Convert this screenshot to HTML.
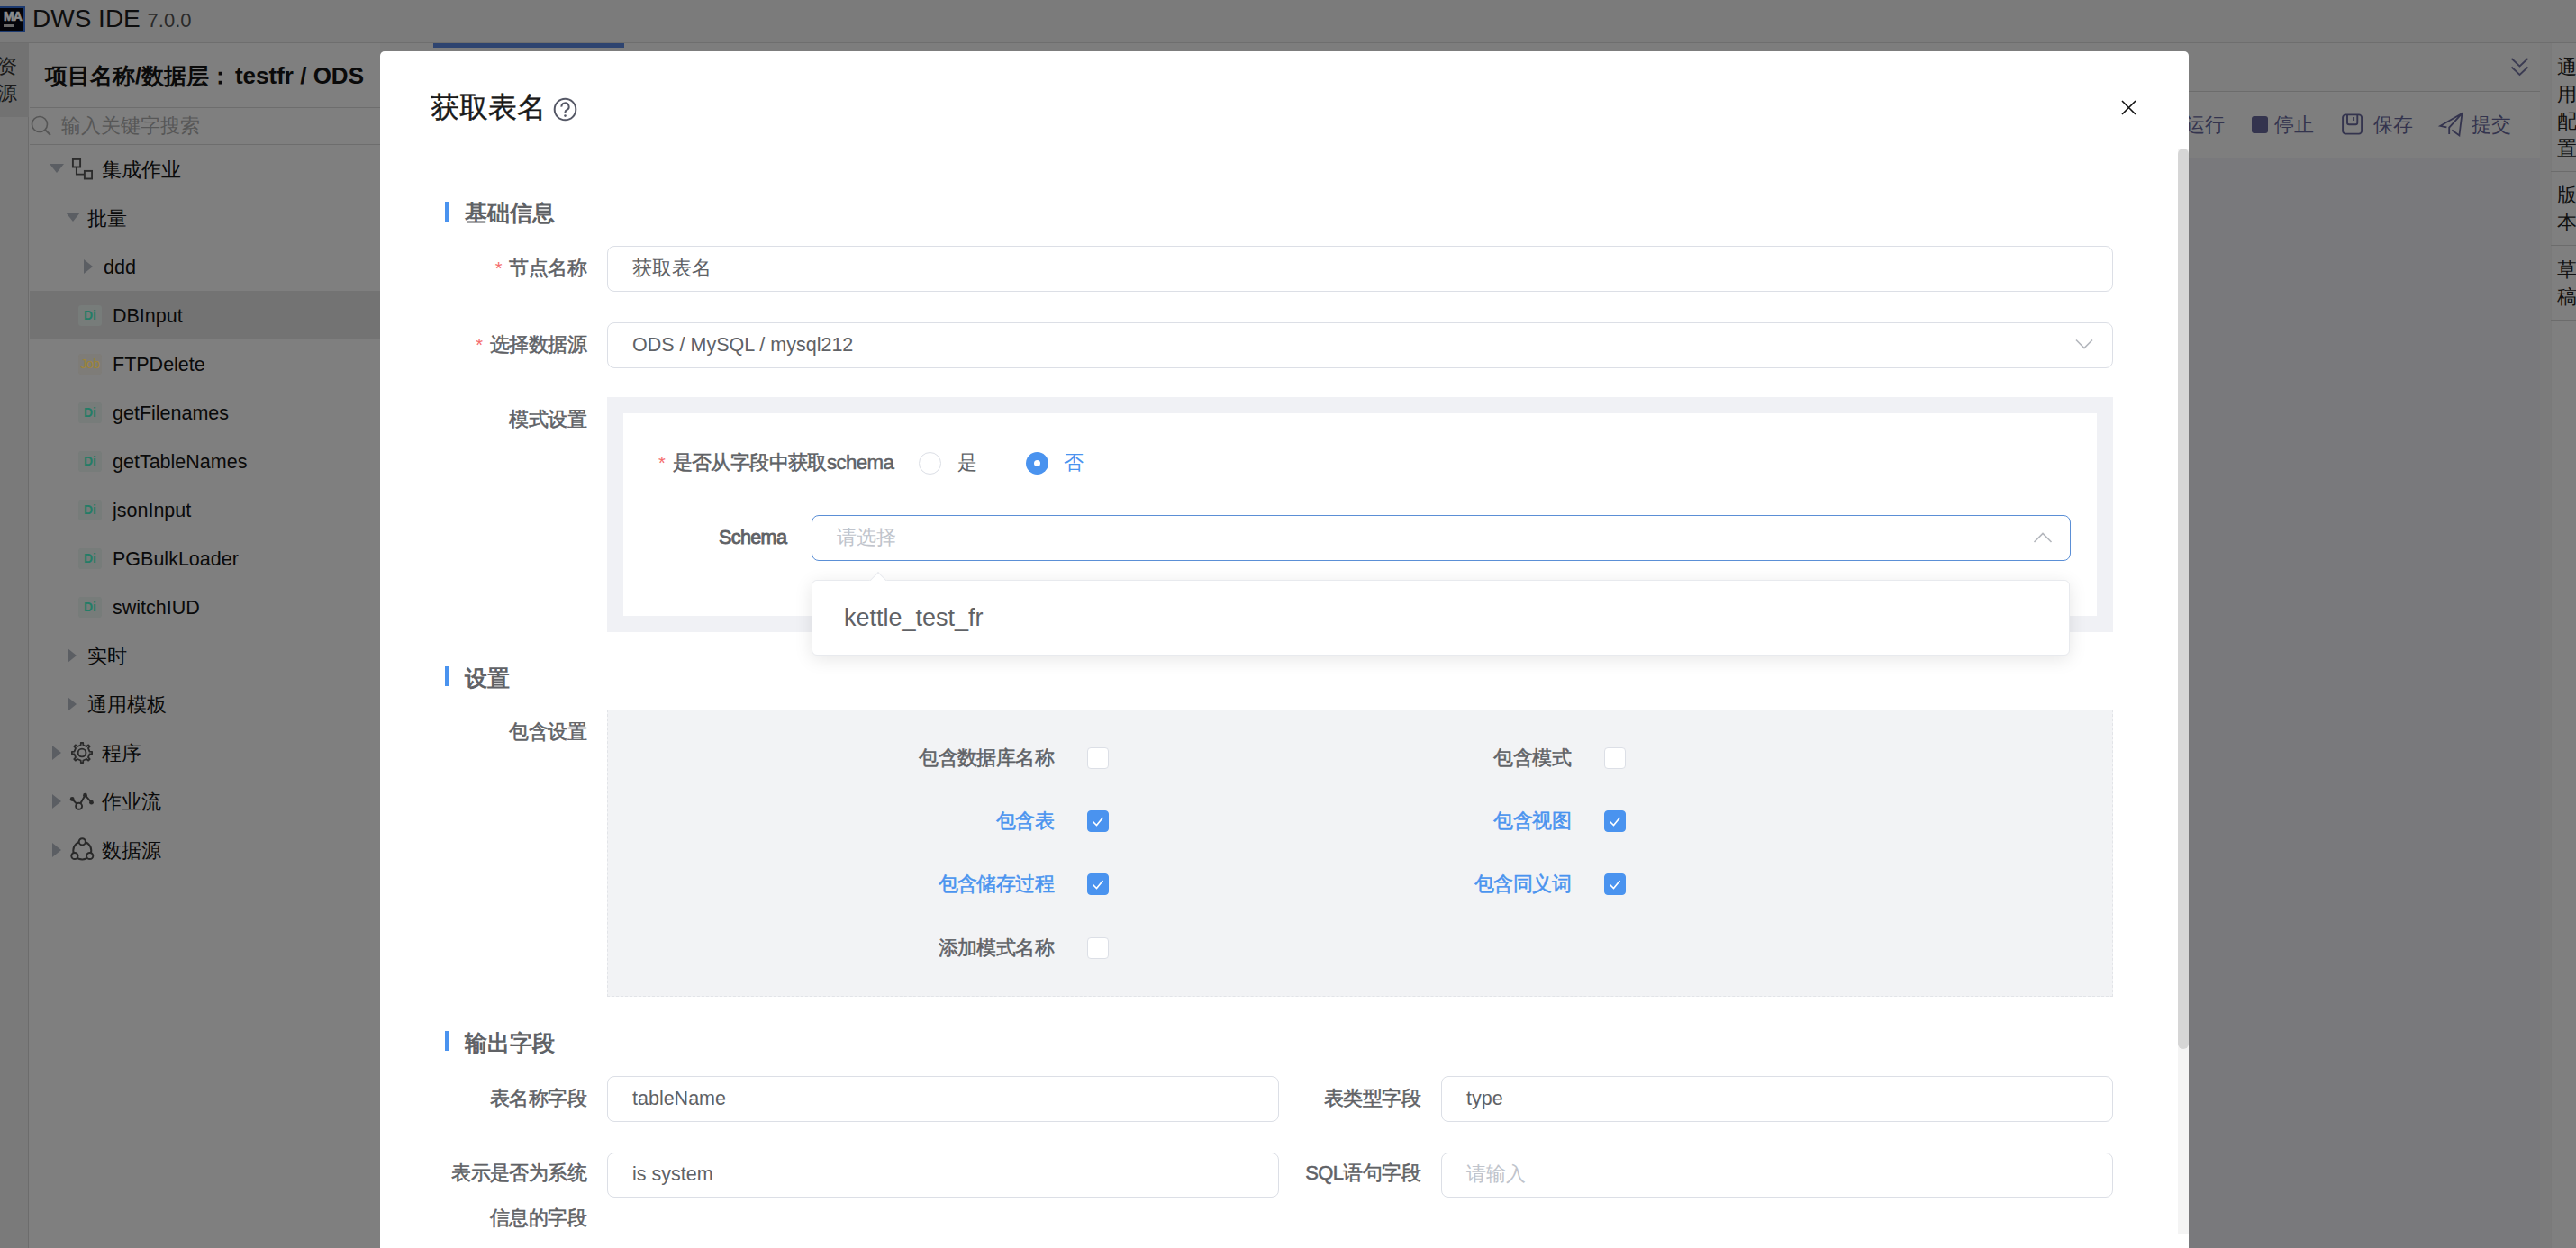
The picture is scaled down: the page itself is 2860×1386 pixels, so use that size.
<!DOCTYPE html>
<html><head><meta charset="utf-8">
<style>
*{box-sizing:border-box}
html,body{margin:0;padding:0}
html{overflow:hidden}
body{width:2860px;height:1386px;overflow:hidden;position:relative;background:#7f7f7f;font-family:"Liberation Sans",sans-serif;color:#111}
.a{position:absolute;white-space:nowrap}
/* header */
#hdr{left:0;top:0;width:2860px;height:48px;background:#7b7b7b;border-bottom:1px solid #6e6e6e}
#tabstrip{left:0;top:48px;width:32px;height:1338px;background:#7a7a7a;border-right:1px solid #6c6c6c}
#tabsel{left:0;top:48px;width:32px;height:82px;background:#727272}
#side{left:33px;top:48px;width:389px;height:1338px;background:#7f7f7f}
.tree{font-size:21.5px;line-height:56px;height:54px;color:#0a0a0a}
.tri{position:absolute;width:0;height:0}
.tri.d{border-left:8px solid transparent;border-right:8px solid transparent;border-top:10px solid #5b5e63}
.tri.r{border-top:8px solid transparent;border-bottom:8px solid transparent;border-left:10px solid #5b5e63}
.badge{position:absolute;width:26px;height:23px;border-radius:3px;font-size:14px;line-height:23px;text-align:center}
.badge.di{background:#777c7a;color:#237d67;font-weight:bold}
.badge.job{background:#7e7c78;color:#a08539;letter-spacing:-0.3px}
/* modal */
#modal{left:422px;top:57px;width:2008px;height:1329px;background:#fff;border-radius:5px 5px 0 0}
.lbl{font-size:22px;letter-spacing:-0.6px;padding-right:1px;color:#606266;text-align:right;-webkit-text-stroke:0.5px #606266}
.req{color:#f56c6c;font-size:20px;margin-right:3px;-webkit-text-stroke:0}
.sec{font-size:25px;color:#606266;font-weight:bold}
.bar{position:absolute;width:4px;height:22px;background:#4a93ef}
.inp{position:absolute;border:1.5px solid #dcdfe6;border-radius:8px;background:#fff;height:50px}
.inp .t{position:absolute;left:27px;top:0;line-height:47px;font-size:21.5px;color:#606266}
.inp .ph{color:#c0c4cc}
.cb{position:absolute;width:24px;height:24px;border:1.5px solid #dcdfe6;border-radius:4px;background:#fff}
.cb.on{background:#4a93ef;border-color:#4a93ef}
.cbl{font-size:22px;letter-spacing:-0.6px;padding-right:1px;color:#606266;text-align:right;-webkit-text-stroke:0.5px #606266}
.cbl.on{color:#4a93ef;-webkit-text-stroke:0.5px #4a93ef}
</style></head>
<body>
<!-- header -->
<div class="a" id="hdr"></div>
<div class="a" style="left:0;top:7px;width:28px;height:29px;background:#03040a;border:2px solid #1c3a70;border-left:none"></div>
<div class="a" style="left:4px;top:11px;font-size:14px;line-height:14px;font-weight:bold;color:#8c8c8c;letter-spacing:-0.8px;-webkit-text-stroke:0.7px #8c8c8c">MA</div>
<div class="a" style="left:4px;top:27px;width:12px;height:3px;background:#6a6a6a"></div>
<div class="a" style="left:36px;top:-1px;font-size:28px;line-height:44px;color:#0e0e0e">DWS IDE <span style="font-size:22px;color:#2a2a2a">7.0.0</span></div>

<div class="a" id="tabstrip"></div>
<div class="a" id="tabsel"></div>
<div class="a" style="left:-3px;top:59px;font-size:22px;line-height:30px;color:#1a1a1a;white-space:normal;width:24px">资源</div>

<!-- sidebar -->
<div class="a" id="side"></div>
<div class="a" style="left:50px;top:66px;font-size:25px;line-height:36px;font-weight:bold;color:#0a0a0a">项目名称/数据层：<span style="font-size:26px;margin-left:4px">testfr / ODS</span></div>
<div class="a" style="left:33px;top:119px;width:389px;height:1px;background:#6d6d6d"></div>
<svg class="a" style="left:34px;top:128px" width="24" height="24" viewBox="0 0 24 24"><circle cx="10" cy="10" r="8.5" fill="none" stroke="#555" stroke-width="1.6"/><line x1="16" y1="16" x2="22" y2="22" stroke="#555" stroke-width="1.8"/></svg>
<div class="a" style="left:68px;top:122px;font-size:22px;line-height:36px;color:#575757">输入关键字搜索</div>
<div class="a" style="left:33px;top:160px;width:389px;height:1px;background:#6d6d6d"></div>

<div class="a" style="left:33px;top:323px;width:389px;height:54px;background:#737373"></div>

<div class="tri d" style="left:55px;top:182px"></div>
<svg class="a" style="left:79px;top:176px" width="24" height="24" viewBox="0 0 24 24"><rect x="1.9" y="0.9" width="8.2" height="8.6" fill="none" stroke="#2c2c2c" stroke-width="1.9"/><path d="M5.9 9.5V17.6H14" fill="none" stroke="#2c2c2c" stroke-width="1.9"/><rect x="14.9" y="13.9" width="8.2" height="8.6" fill="none" stroke="#2c2c2c" stroke-width="1.9"/></svg>
<div class="a tree" style="left:113px;top:161px">集成作业</div>
<div class="tri d" style="left:73px;top:236px"></div>
<div class="a tree" style="left:97px;top:215px">批量</div>
<div class="tri r" style="left:93px;top:288px"></div>
<div class="a tree" style="left:115px;top:269px">ddd</div>
<div class="badge di" style="left:87px;top:339px">Di</div>
<div class="a tree" style="left:125px;top:323px">DBInput</div>
<div class="badge job" style="left:87px;top:393px">Job</div>
<div class="a tree" style="left:125px;top:377px">FTPDelete</div>
<div class="badge di" style="left:87px;top:447px">Di</div>
<div class="a tree" style="left:125px;top:431px">getFilenames</div>
<div class="badge di" style="left:87px;top:501px">Di</div>
<div class="a tree" style="left:125px;top:485px">getTableNames</div>
<div class="badge di" style="left:87px;top:555px">Di</div>
<div class="a tree" style="left:125px;top:539px">jsonInput</div>
<div class="badge di" style="left:87px;top:609px">Di</div>
<div class="a tree" style="left:125px;top:593px">PGBulkLoader</div>
<div class="badge di" style="left:87px;top:663px">Di</div>
<div class="a tree" style="left:125px;top:647px">switchIUD</div>
<div class="tri r" style="left:75px;top:720px"></div>
<div class="a tree" style="left:97px;top:701px">实时</div>
<div class="tri r" style="left:75px;top:774px"></div>
<div class="a tree" style="left:97px;top:755px">通用模板</div>
<div class="tri r" style="left:58px;top:828px"></div>
<svg class="a" style="left:79px;top:824px" width="24" height="24" viewBox="0 0 24 24"><path d="M20.49 10.65 L23.14 10.86 L23.14 13.14 L20.49 13.35 L18.96 17.05 L20.69 19.07 L19.07 20.69 L17.05 18.96 L13.35 20.49 L13.14 23.14 L10.86 23.14 L10.65 20.49 L6.95 18.96 L4.93 20.69 L3.31 19.07 L5.04 17.05 L3.51 13.35 L0.86 13.14 L0.86 10.86 L3.51 10.65 L5.04 6.95 L3.31 4.93 L4.93 3.31 L6.95 5.04 L10.65 3.51 L10.86 0.86 L13.14 0.86 L13.35 3.51 L17.05 5.04 L19.07 3.31 L20.69 4.93 L18.96 6.95Z" fill="none" stroke="#2a2a2a" stroke-width="1.8" stroke-linejoin="round"/><circle cx="12" cy="12" r="4.4" fill="none" stroke="#2a2a2a" stroke-width="1.9"/></svg>
<div class="a tree" style="left:113px;top:809px">程序</div>
<div class="tri r" style="left:58px;top:882px"></div>
<svg class="a" style="left:77px;top:879px" width="28" height="22" viewBox="0 0 28 22"><path d="M3.2 8.5 10.6 16.3 17.5 4.2 24.5 12.2" fill="none" stroke="#2a2a2a" stroke-width="1.9"/><circle cx="3.2" cy="8.5" r="2.4" fill="#2a2a2a"/><circle cx="17.5" cy="4.2" r="2.4" fill="#2a2a2a"/><circle cx="24.5" cy="12.2" r="2.4" fill="#2a2a2a"/><circle cx="10.6" cy="16.3" r="3.5" fill="#7f7f7f" stroke="#2a2a2a" stroke-width="1.9"/></svg>
<div class="a tree" style="left:113px;top:863px">作业流</div>
<div class="tri r" style="left:58px;top:936px"></div>
<svg class="a" style="left:77px;top:929px" width="28" height="28" viewBox="0 0 28 28"><circle cx="14.3" cy="15.5" r="10" fill="none" stroke="#2a2a2a" stroke-width="2"/><circle cx="14.3" cy="5.8" r="3.6" fill="#7f7f7f" stroke="#2a2a2a" stroke-width="2"/><circle cx="5.9" cy="21.5" r="3.6" fill="#7f7f7f" stroke="#2a2a2a" stroke-width="2"/><circle cx="22.7" cy="21.5" r="3.6" fill="#7f7f7f" stroke="#2a2a2a" stroke-width="2"/></svg>
<div class="a tree" style="left:113px;top:917px">数据源</div>

<!-- editor area -->
<div class="a" style="left:422px;top:48px;width:2410px;height:54px;background:#7d7d7d;border-bottom:1px solid #6c6c6c"></div>
<div class="a" style="left:481px;top:48px;width:212px;height:5px;background:#2e4470"></div>
<svg class="a" style="left:2786px;top:63px" width="23" height="23" viewBox="0 0 23 23"><path d="M2.5 2 11.5 10.5 20.5 2M2.5 11.5 11.5 20 20.5 11.5" fill="none" stroke="#3b3b52" stroke-width="1.8"/></svg>
<div class="a" style="left:422px;top:103px;width:2398px;height:73px;background:#7e7e7e"></div>
<div class="a" style="left:422px;top:176px;width:2398px;height:1210px;background:#79797c"></div>
<div class="a" style="left:2426px;top:121px;font-size:22px;line-height:36px;color:#34344e">运行</div>
<div class="a" style="left:2500px;top:129px;width:18px;height:19px;border-radius:3px;background:#34344e"></div>
<div class="a" style="left:2525px;top:121px;font-size:22px;line-height:36px;color:#34344e">停止</div>
<svg class="a" style="left:2598px;top:124px" width="28" height="28" viewBox="0 0 28 28"><rect x="3.1" y="3.4" width="21" height="21.2" rx="3.2" fill="none" stroke="#34344e" stroke-width="1.9"/><path d="M8 3.5V12.3a2 2 0 0 0 2 2H17.3a2 2 0 0 0 2-2V3.5M15.1 6V10" fill="none" stroke="#34344e" stroke-width="1.9"/></svg>
<div class="a" style="left:2635px;top:121px;font-size:22px;line-height:36px;color:#34344e">保存</div>
<svg class="a" style="left:2705px;top:122px" width="32" height="32" viewBox="0 0 32 32"><path d="M11.4 19.4 4.3 17.8 28.5 3.9 25.4 28.4 17.3 22.5M28.5 3.9 14.2 19.7V26.9" fill="none" stroke="#34344e" stroke-width="1.8" stroke-linejoin="miter"/></svg>
<div class="a" style="left:2744px;top:121px;font-size:22px;line-height:36px;color:#34344e">提交</div>

<!-- right panel -->
<div class="a" style="left:2820px;top:48px;width:12px;height:1338px;background:#7b7b7b"></div>
<div class="a" style="left:2832px;top:48px;width:28px;height:1338px;background:#7f7f7f;border-left:1px solid #7a7a7a"></div>

<div class="a" style="left:2832px;top:190px;width:28px;height:1px;background:#6c6c6c"></div>

<div class="a" style="left:2832px;top:272px;width:28px;height:1px;background:#6c6c6c"></div>

<div class="a" style="left:2832px;top:355px;width:28px;height:1px;background:#6c6c6c"></div>
<div class="a" style="left:2832px;top:0;width:28px;height:1386px;overflow:hidden"><div class="a" style="left:7px;top:60px;width:24px;font-size:22px;line-height:30px;color:#111;white-space:normal">通用配置</div><div class="a" style="left:7px;top:202px;width:24px;font-size:22px;line-height:30px;color:#111;white-space:normal">版本</div><div class="a" style="left:7px;top:285px;width:24px;font-size:22px;line-height:30px;color:#111;white-space:normal">草稿</div></div>

<div class="a" id="modal"></div>
<div class="a" style="left:478px;top:99px;font-size:32px;line-height:40px;color:#1a1a1a;-webkit-text-stroke:0.4px #1a1a1a">获取表名</div>
<svg class="a" style="left:614px;top:108px" width="28" height="28" viewBox="0 0 28 28"><circle cx="13.5" cy="13.5" r="11.8" fill="none" stroke="#555866" stroke-width="2"/><path d="M9.4 10.6a4.1 4.1 0 1 1 5.8 3.6c-1 .5-1.7 1.2-1.7 2.3v1.2" fill="none" stroke="#555866" stroke-width="2"/><circle cx="13.5" cy="20.6" r="1.3" fill="#555866"/></svg>
<svg class="a" style="left:2354px;top:110px" width="19" height="19" viewBox="0 0 19 19"><path d="M2 2 17 17M17 2 2 17" stroke="#111" stroke-width="1.6"/></svg>
<div class="a" style="left:2418px;top:165px;width:12px;height:1205px;background:#f4f4f4"></div>
<div class="a" style="left:2418px;top:165px;width:12px;height:1000px;background:#d6d6d6;border-radius:6px"></div>
<div class="bar" style="left:494px;top:224px"></div>
<div class="a sec" style="left:516px;top:218px;line-height:36px">基础信息</div>
<div class="a lbl" style="right:2208px;top:280px;line-height:36px"><span class="req">*</span> 节点名称</div>
<div class="inp" style="left:674px;top:273px;width:1672px;height:51px;"><div class="t" style="line-height:48px">获取表名</div></div>
<div class="a lbl" style="right:2208px;top:365px;line-height:36px"><span class="req">*</span> 选择数据源</div>
<div class="inp" style="left:674px;top:358px;width:1672px;height:51px;"><div class="t" style="line-height:48px">ODS / MySQL / mysql212</div></div>
<svg class="a" style="left:2304px;top:376px" width="20" height="12" viewBox="0 0 20 12"><path d="M1 1.5 10 10.5 19 1.5" fill="none" stroke="#b4b7bd" stroke-width="1.6"/></svg>
<div class="a lbl" style="right:2208px;top:448px;line-height:36px">模式设置</div>
<div class="a" style="left:674px;top:441px;width:1672px;height:261px;background:#f0f1f5"></div>
<div class="a" style="left:692px;top:459px;width:1636px;height:225px;background:#fff"></div>
<div class="a lbl" style="left:731px;top:496px;line-height:36px"><span class="req">*</span> 是否从字段中获取<span style="font-size:22.3px">schema</span></div>
<div class="a" style="left:1020px;top:502px;width:25px;height:25px;border-radius:50%;border:1.5px solid #dcdfe6;background:#fff"></div>
<div class="a" style="left:1063px;top:496px;font-size:22px;line-height:36px;color:#606266;font-weight:500">是</div>
<div class="a" style="left:1139px;top:502px;width:25px;height:25px;border-radius:50%;background:#4a93ef"></div>
<div class="a" style="left:1148px;top:511px;width:7px;height:7px;border-radius:50%;background:#fff"></div>
<div class="a" style="left:1181px;top:496px;font-size:22px;line-height:36px;color:#4a93ef;font-weight:500">否</div>
<div class="a lbl" style="left:798px;top:579px;line-height:36px;font-size:21.5px;-webkit-text-stroke:0.9px #606266">Schema</div>
<div class="inp" style="left:901px;top:572px;width:1398px;height:51px;border-color:#5b8fd6"><div class="t ph" style="line-height:48px">请选择</div></div>
<svg class="a" style="left:2257px;top:590px" width="22" height="14" viewBox="0 0 22 14"><path d="M1.5 12 11 2.5 20.5 12" fill="none" stroke="#b4b7bd" stroke-width="1.6"/></svg>
<div class="a" style="left:901px;top:644px;width:1397px;height:84px;background:#fff;border:1px solid #e8eaee;border-radius:6px;box-shadow:0 4px 20px rgba(0,0,0,0.10)"></div>
<div class="a" style="left:967.5px;top:637.5px;width:14px;height:14px;background:#fff;border-left:1px solid #e8eaee;border-top:1px solid #e8eaee;transform:rotate(45deg)"></div>
<div class="a" style="left:902px;top:645px;width:1395px;height:20px;background:#fff;border-radius:6px 6px 0 0"></div>
<div class="a" style="left:937px;top:666px;font-size:27px;line-height:40px;color:#606266">kettle_test_fr</div>
<div class="bar" style="left:494px;top:740px"></div>
<div class="a sec" style="left:516px;top:735px;line-height:36px">设置</div>
<div class="a lbl" style="right:2208px;top:795px;line-height:36px">包含设置</div>
<div class="a" style="left:674px;top:788px;width:1672px;height:319px;background:#f2f3f5;border:1px dashed #e2e4e8"></div>
<div class="a cbl" style="right:1689px;top:824px;line-height:36px">包含数据库名称</div>
<div class="cb" style="left:1207px;top:830px"></div>
<div class="a cbl" style="right:1115px;top:824px;line-height:36px">包含模式</div>
<div class="cb" style="left:1781px;top:830px"></div>
<div class="a cbl on" style="right:1689px;top:894px;line-height:36px">包含表</div>
<div class="cb on" style="left:1207px;top:900px"><svg width="24" height="24" viewBox="0 0 24 24" style="position:absolute;left:-1.5px;top:-1.5px"><path d="M6.5 12.5 10.5 16.5 17.5 8" fill="none" stroke="#fff" stroke-width="1.6"/></svg></div>
<div class="a cbl on" style="right:1115px;top:894px;line-height:36px">包含视图</div>
<div class="cb on" style="left:1781px;top:900px"><svg width="24" height="24" viewBox="0 0 24 24" style="position:absolute;left:-1.5px;top:-1.5px"><path d="M6.5 12.5 10.5 16.5 17.5 8" fill="none" stroke="#fff" stroke-width="1.6"/></svg></div>
<div class="a cbl on" style="right:1689px;top:964px;line-height:36px">包含储存过程</div>
<div class="cb on" style="left:1207px;top:970px"><svg width="24" height="24" viewBox="0 0 24 24" style="position:absolute;left:-1.5px;top:-1.5px"><path d="M6.5 12.5 10.5 16.5 17.5 8" fill="none" stroke="#fff" stroke-width="1.6"/></svg></div>
<div class="a cbl on" style="right:1115px;top:964px;line-height:36px">包含同义词</div>
<div class="cb on" style="left:1781px;top:970px"><svg width="24" height="24" viewBox="0 0 24 24" style="position:absolute;left:-1.5px;top:-1.5px"><path d="M6.5 12.5 10.5 16.5 17.5 8" fill="none" stroke="#fff" stroke-width="1.6"/></svg></div>
<div class="a cbl" style="right:1689px;top:1035px;line-height:36px">添加模式名称</div>
<div class="cb" style="left:1207px;top:1041px"></div>
<div class="bar" style="left:494px;top:1145px"></div>
<div class="a sec" style="left:516px;top:1140px;line-height:36px">输出字段</div>
<div class="a lbl" style="right:2208px;top:1202px;line-height:36px">表名称字段</div>
<div class="inp" style="left:674px;top:1195px;width:746px;height:51px;"><div class="t" style="line-height:48px">tableName</div></div>
<div class="a lbl" style="right:1282px;top:1202px;line-height:36px">表类型字段</div>
<div class="inp" style="left:1600px;top:1195px;width:746px;height:51px;"><div class="t" style="line-height:48px">type</div></div>
<div class="a lbl" style="right:2208px;top:1285px;line-height:36px">表示是否为系统</div>
<div class="a lbl" style="right:2208px;top:1335px;line-height:36px">信息的字段</div>
<div class="inp" style="left:674px;top:1280px;width:746px;height:50px;"><div class="t" style="line-height:47px">is system</div></div>
<div class="a lbl" style="right:1282px;top:1285px;line-height:36px">SQL语句字段</div>
<div class="inp" style="left:1600px;top:1280px;width:746px;height:50px;"><div class="t ph" style="line-height:47px">请输入</div></div>
</body></html>
